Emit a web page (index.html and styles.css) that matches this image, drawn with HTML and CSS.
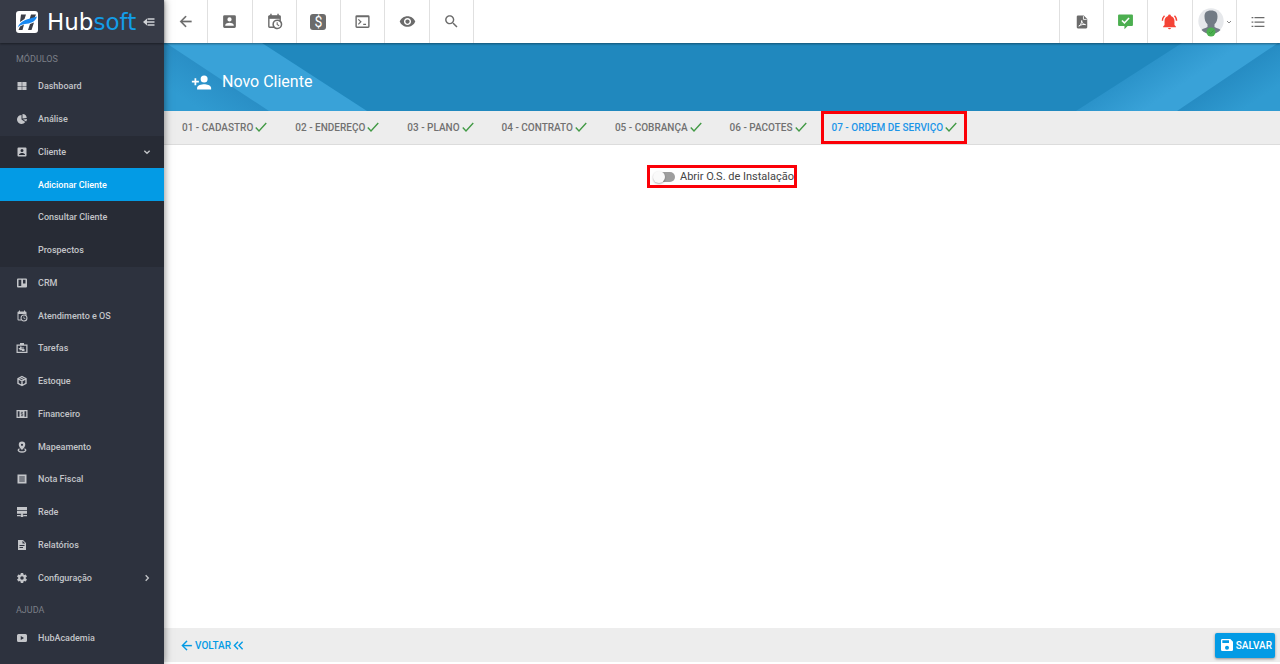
FILE: index.html
```html
<!DOCTYPE html>
<html lang="pt-BR">
<head>
<meta charset="utf-8">
<meta name="viewport" content="width=device-width, initial-scale=1">
<title>Novo Cliente - Hubsoft</title>
<link rel="stylesheet" href="styles.css">
</head>
<body>
<svg class="sprite" aria-hidden="true">
  <symbol id="back" viewBox="0 0 24 24"><path d="M20.500 11H7.830l5.590-5.590L12 4l-8 8 8 8 1.410-1.410L7.830 13H20.500z" stroke="currentColor" stroke-width=".3"/></symbol>
  <symbol id="contact" viewBox="0 0 24 24"><path d="M6 17c0-2 4-3.1 6-3.1s6 1.1 6 3.1v1H6m9-9a3 3 0 0 1-3 3 3 3 0 0 1-3-3 3 3 0 0 1 3-3 3 3 0 0 1 3 3M3 5v14a2 2 0 0 0 2 2h14a2 2 0 0 0 2-2V5a2 2 0 0 0-2-2H5a2 2 0 0 0-2 2z"/></symbol>
  <symbol id="calendar" viewBox="0 0 24 24"><path d="M15 13h1.5v2.82l2.44 1.41-.75 1.3L15 16.69V13m4-5H5v11h4.67c-.43-.91-.67-1.93-.67-3a7 7 0 0 1 7-7c1.07 0 2.09.24 3 .67V8M5 21a2 2 0 0 1-2-2V5c0-1.11.89-2 2-2h1V1h2v2h8V1h2v2h1a2 2 0 0 1 2 2v6.1c1.24 1.26 2 2.99 2 4.9a7 7 0 0 1-7 7c-1.91 0-3.64-.76-4.9-2H5m11-9.85A4.85 4.85 0 0 0 11.15 16c0 2.68 2.17 4.85 4.85 4.85A4.85 4.85 0 0 0 20.85 16c0-2.68-2.17-4.85-4.85-4.85z"/><path d="M4 4h16v3.500H4z"/></symbol>
  <symbol id="console" viewBox="0 0 24 24"><path d="M20 19V6H4v13h16m0-16a2 2 0 0 1 2 2v14a2 2 0 0 1-2 2H4a2 2 0 0 1-2-2V5a2 2 0 0 1 2-2h16m-7 14v-2h4v2h-4m-6.300-.3l-1.200-1.200 3-3-3-3 1.200-1.200 4.200 4.200z"/></symbol>
  <symbol id="eye" viewBox="0 0 24 24"><path d="M12 4.500C7 4.500 2.730 7.610 1 12c1.730 4.390 6 7.500 11 7.500s9.270-3.110 11-7.500c-1.730-4.390-6-7.500-11-7.500zM12 17c-2.760 0-5-2.240-5-5s2.240-5 5-5 5 2.240 5 5-2.240 5-5 5zm0-8c-1.660 0-3 1.340-3 3s1.340 3 3 3 3-1.340 3-3-1.340-3-3-3z"/></symbol>
  <symbol id="search" viewBox="0 0 24 24"><path d="M15.500 14h-.79l-.28-.27C15.410 12.590 16 11.110 16 9.500 16 5.910 13.090 3 9.500 3S3 5.910 3 9.500 5.910 16 9.500 16c1.610 0 3.090-.59 4.230-1.570l.27.28v.79l5 4.990L20.490 19l-4.990-5zm-6 0C7.010 14 5 11.990 5 9.500S7.010 5 9.500 5 14 7.010 14 9.500 11.990 14 9.500 14z"/></symbol>
  <symbol id="pdf" viewBox="0 0 24 24"><path d="M5 1h10l6 6v14a2 2 0 0 1-2 2H5a2 2 0 0 1-2-2V3a2 2 0 0 1 2-2z"/><path d="M14.500 2v5.500H20" fill="none" stroke="#fff" stroke-width="1.500"/><path d="M6.500 19c2-.5 5-4.500 5-9.500 0 3.500 2 6.500 6.500 7-3-1.200-8 .2-11.500 2.500z" fill="none" stroke="#fff" stroke-width="1.700"/></symbol>
  <symbol id="message" viewBox="0 0 24 24"><path d="M3 2h18a1.500 1.500 0 0 1 1.500 1.500V17a1.500 1.500 0 0 1-1.500 1.500h-6L10.500 23v-4.500H3A1.500 1.500 0 0 1 1.500 17V3.500A1.500 1.500 0 0 1 3 2z"/><path d="M7 10.500l3.500 3.500L17 7" fill="none" stroke="#fff" stroke-width="2.200"/></symbol>
  <symbol id="bell" viewBox="0 0 24 24"><path d="M21 19v1H3v-1l2-2v-6c0-3.100 2.030-5.830 5-6.710V4a2 2 0 0 1 4 0v.29c2.970.88 5 3.610 5 6.710v6l2 2m-7 2a2 2 0 0 1-4 0m9.750-17.810l-1.420 1.420A8.980 8.980 0 0 1 21 11h2c0-2.930-1.160-5.750-3.250-7.810M1 11h2c0-2.400.96-4.700 2.670-6.390L4.250 3.190A10.960 10.960 0 0 0 1 11z"/></symbol>
  <symbol id="list" viewBox="0 0 24 24"><path d="M6 3.500h17v2.200H6zM6 11h17v2.200H6zM6 18.500h17v2.200H6zM1 3.500h3v2.200H1zM1 11h3v2.200H1zM1 18.500h3v2.200H1z"/></symbol>
  <symbol id="person-add" viewBox="0 0 24 24"><path d="M15 14c-2.670 0-8 1.330-8 4v2h16v-2c0-2.670-5.330-4-8-4m-9-4V7H4v3H1v2h3v3h2v-3h3v-2m6 2a4 4 0 0 0 0-8 4 4 0 0 0 0 8z"/></symbol>
  <symbol id="check" viewBox="0 0 24 24"><path d="M1.500 13l6.500 7L22.500 4" fill="none" stroke="currentColor" stroke-width="2.800"/></symbol>
  <symbol id="save" viewBox="0 0 24 24"><path d="M17 3H5a2 2 0 0 0-2 2v14a2 2 0 0 0 2 2h14a2 2 0 0 0 2-2V7l-4-4zm-5 16a3 3 0 1 1 0-6 3 3 0 0 1 0 6zm3-10H5V5h10v4z"/></symbol>
  <symbol id="gear" viewBox="0 0 24 24"><path d="M12 15.500A3.500 3.500 0 0 1 8.500 12 3.500 3.500 0 0 1 12 8.500a3.500 3.500 0 0 1 3.500 3.500 3.500 3.500 0 0 1-3.500 3.500m7.430-2.530c.04-.32.07-.64.07-.97s-.03-.66-.07-1l2.110-1.630c.19-.15.24-.42.12-.64l-2-3.460c-.12-.22-.39-.31-.61-.22l-2.490 1c-.52-.39-1.060-.73-1.690-.98l-.37-2.650A.5.5 0 0 0 14 2h-4c-.25 0-.46.18-.5.42l-.37 2.650c-.63.25-1.170.59-1.690.98l-2.490-1c-.22-.09-.49 0-.61.22l-2 3.460c-.13.22-.07.49.12.64L4.570 11c-.04.34-.07.67-.07 1s.03.65.07.97l-2.110 1.660c-.19.15-.25.42-.12.64l2 3.460c.12.22.39.3.61.22l2.490-1.010c.52.4 1.060.74 1.690.99l.37 2.650c.04.24.25.42.5.42h4c.25 0 .46-.18.5-.42l.37-2.650c.63-.26 1.170-.59 1.690-.99l2.490 1.010c.22.08.49 0 .61-.22l2-3.460c.12-.22.07-.49-.12-.64l-2.110-1.660z"/></symbol>
  <symbol id="dashboard" viewBox="0 0 24 24"><path d="M3 4h8.500v8H3zM12.500 4H21v8h-8.500zM3 13h8.500v7H3zM12.500 13H21v7h-8.500z"/></symbol>
  <symbol id="chart" viewBox="0 0 24 24"><path d="M11 4v9l7.500 5A9 9 0 1 1 11 4zM13 2a9 9 0 0 1 8.500 8L13 11zM14 13l8-1c0 2-.7 3.500-1.700 5z"/></symbol>
  <symbol id="board" viewBox="0 0 24 24"><path fill-rule="evenodd" d="M4 3h16a2 2 0 0 1 2 2v14a2 2 0 0 1-2 2H4a2 2 0 0 1-2-2V5a2 2 0 0 1 2-2zM5 5.500v12.500h5.500V5.500zm9 0v7.500h5V5.500z"/></symbol>
  <symbol id="task" viewBox="0 0 24 24"><path fill-rule="evenodd" d="M8 5V2h8v3h7v17H1V5zM3.500 7.500v12h17v-12z"/><path d="M8 9h3v2h5v2h-5v1h6v4h-5v-1.500H7V14H5.500v-2H8z"/></symbol>
  <symbol id="box" viewBox="0 0 24 24"><path d="M12 3l8 4.500v9L12 21l-8-4.500v-9zM4 7.500l8 4.500 8-4.500M12 12v9M8 5l8 4.500" fill="none" stroke="currentColor" stroke-width="2.800"/></symbol>
  <symbol id="money" viewBox="0 0 24 24"><path fill-rule="evenodd" d="M1 4h22v16H1zM3.500 6.500v11h3.500v-11zm13.500 0v11h3.500v-11z"/><path d="M14 9h-3.500v3h3v3H10M12 7v10" fill="none" stroke="#2d323e" stroke-width="1"/></symbol>
  <symbol id="pin" viewBox="0 0 24 24"><path fill-rule="evenodd" d="M12 1a6.500 6.500 0 0 1 6.500 6.500C18.500 12 12 18 12 18S5.500 12 5.500 7.500A6.500 6.500 0 0 1 12 1zm0 4.500a2.200 2.200 0 1 0 0 4.400 2.200 2.200 0 0 0 0-4.400z"/><path d="M7 15.500c-6 3 0 6.500 5 6.500s11-3.500 5-6.500" fill="none" stroke="currentColor" stroke-width="2.600"/></symbol>
  <symbol id="note" viewBox="0 0 24 24"><path fill-rule="evenodd" d="M3 3h18v18H3zM6.500 7v1.800h11V7zm0 4v1.800h11V11zm0 4v1.800h11V15z"/></symbol>
  <symbol id="server" viewBox="0 0 24 24"><path d="M2 2h20v6H2zM2 9.500h20v6H2zM10.500 15h3v3h-3zM2 18h7v2.500H2zM15 18h7v2.500h-7zM9.500 17h5v5h-5z"/></symbol>
  <symbol id="doc" viewBox="0 0 24 24"><path fill-rule="evenodd" d="M4 2h10l6 6v14H4zM13 3.500V9h5.500zM7 12v1.800h10V12zm0 4v1.800h7V16z"/></symbol>
  <symbol id="video" viewBox="0 0 24 24"><path fill-rule="evenodd" d="M5 4h14a3 3 0 0 1 3 3v10a3 3 0 0 1-3 3H5a3 3 0 0 1-3-3V7a3 3 0 0 1 3-3zm4.500 4v8l6.500-4z"/></symbol>
  <symbol id="down" viewBox="0 0 24 24"><path d="M4 8l8 8 8-8" fill="none" stroke="currentColor" stroke-width="4"/></symbol>
  <symbol id="right" viewBox="0 0 24 24"><path d="M8 4l8 8-8 8" fill="none" stroke="currentColor" stroke-width="4"/></symbol>
  <symbol id="double-left" viewBox="0 0 24 24"><path d="M11 4l-8 8 8 8M21 4l-8 8 8 8" fill="none" stroke="currentColor" stroke-width="3"/></symbol>
</svg>

<div class="app">
  <aside class="sidebar">
    <header class="brand">
      <a class="brand-link" href="#" aria-label="Hubsoft">
        <svg class="brand-mark" viewBox="0 0 24 24" aria-hidden="true"><rect x="1" y="1" width="22" height="22" rx="3" fill="#fff"/><path d="M6 4.500h5L9.500 9 5 12zM16 4.500h5L19.500 8l-5 1.500zM5 16.500l4-2L7.500 20h-4zM15 14l4-1.500L16.500 20H13z" fill="#3c3f49"/><path d="M2.500 17.500C6 10 12 9.500 22 6.500c-1.500 5.500-7 7-12 7.500-3.500.5-5.500 1.500-7.500 3.500z" fill="#1688f2"/></svg>
        <span class="brand-name">Hub<span class="brand-soft">soft</span></span>
      </a>
      <button class="fold" type="button" aria-label="Recolher menu"><svg class="fold-icon" viewBox="0 0 24 24"><path d="M0 12l8-7v5.500h15v3H8V19zM9 4.500h14v2.800H9zM9 16.700h14v2.800H9z"/></svg></button>
    </header>
    <nav class="menu" aria-label="Principal">
      <h2 class="menu-title">MÓDULOS</h2>
      <ul class="menu-list">
        <li><a class="item" href="#"><svg class="item-icon"><use href="#dashboard"/></svg>Dashboard</a></li>
        <li><a class="item" href="#"><svg class="item-icon"><use href="#chart"/></svg>Análise</a></li>
        <li class="group">
          <a class="item" href="#"><svg class="item-icon"><use href="#contact"/></svg>Cliente<svg class="item-arrow"><use href="#down"/></svg></a>
          <a class="item sub active" href="#" aria-current="page">Adicionar Cliente</a>
          <a class="item sub" href="#">Consultar Cliente</a>
          <a class="item sub" href="#">Prospectos</a>
        </li>
        <li><a class="item" href="#"><svg class="item-icon"><use href="#board"/></svg>CRM</a></li>
        <li><a class="item" href="#"><svg class="item-icon"><use href="#calendar"/></svg>Atendimento e OS</a></li>
        <li><a class="item" href="#"><svg class="item-icon"><use href="#task"/></svg>Tarefas</a></li>
        <li><a class="item" href="#"><svg class="item-icon"><use href="#box"/></svg>Estoque</a></li>
        <li><a class="item" href="#"><svg class="item-icon"><use href="#money"/></svg>Financeiro</a></li>
        <li><a class="item" href="#"><svg class="item-icon"><use href="#pin"/></svg>Mapeamento</a></li>
        <li><a class="item" href="#"><svg class="item-icon"><use href="#note"/></svg>Nota Fiscal</a></li>
        <li><a class="item" href="#"><svg class="item-icon"><use href="#server"/></svg>Rede</a></li>
        <li><a class="item" href="#"><svg class="item-icon"><use href="#doc"/></svg>Relatórios</a></li>
        <li><a class="item" href="#"><svg class="item-icon"><use href="#gear"/></svg>Configuração<svg class="item-arrow"><use href="#right"/></svg></a></li>
      </ul>
      <h2 class="menu-title">AJUDA</h2>
      <ul class="help-list">
        <li><a class="item" href="#"><svg class="item-icon"><use href="#video"/></svg>HubAcademia</a></li>
      </ul>
    </nav>
  </aside>

  <div class="page">
    <header class="toolbar">
      <div class="tools tools-left">
        <button class="tool" type="button" aria-label="Voltar"><svg class="icon"><use href="#back"/></svg></button>
        <button class="tool" type="button" aria-label="Clientes"><svg class="icon"><use href="#contact"/></svg></button>
        <button class="tool" type="button" aria-label="Agenda"><svg class="icon"><use href="#calendar"/></svg></button>
        <button class="tool" type="button" aria-label="Financeiro"><span class="dollar">$</span></button>
        <button class="tool" type="button" aria-label="Console"><svg class="icon"><use href="#console"/></svg></button>
        <button class="tool" type="button" aria-label="Visualizar"><svg class="icon"><use href="#eye"/></svg></button>
        <button class="tool" type="button" aria-label="Buscar"><svg class="icon"><use href="#search"/></svg></button>
      </div>
      <div class="tools tools-right">
        <button class="tool" type="button" aria-label="PDF"><svg class="icon icon-small"><use href="#pdf"/></svg></button>
        <button class="tool tool-green" type="button" aria-label="Mensagens"><svg class="icon"><use href="#message"/></svg></button>
        <button class="tool tool-red" type="button" aria-label="Notificações"><svg class="icon"><use href="#bell"/></svg></button>
        <button class="tool tool-profile" type="button" aria-label="Perfil">
          <svg class="avatar" viewBox="0 0 26 30"><circle cx="13" cy="14" r="12.700" fill="#e6e8eb"/><path d="M13 3.500c4.800 0 6.500 2.300 6.500 6 0 3-1 6.300-3 7.800V20c3 1.500 4.500 1.500 6 3a13 13 0 0 1-19 0c1.500-1.500 3-1.500 6-3v-2.700c-2-1.500-3-4.800-3-7.800 0-3.700 1.700-6 6.500-6z" fill="#727b85"/><circle cx="13" cy="25" r="4.500" fill="#4caf50"/><path d="M11 25l1.500 1.500L15.500 23.500" fill="none" stroke="#3a9a3f"/></svg>
          <svg class="tiny"><use href="#down"/></svg>
        </button>
        <button class="tool" type="button" aria-label="Lista"><svg class="icon icon-small"><use href="#list"/></svg></button>
      </div>
    </header>

    <div class="banner">
      <svg class="rays rays-left" viewBox="0 0 204 68" aria-hidden="true">
        <defs><linearGradient id="ray-l" gradientUnits="userSpaceOnUse" x1="52" y1="34" x2="32" y2="64"><stop offset="0" stop-color="#2a8fc6"/><stop offset="1" stop-color="#309bd1"/></linearGradient></defs>
        <path d="M0 0h98l105 68H0z" fill="#39a2d8"/><path d="M0 0h2l103 68H0z" fill="url(#ray-l)"/>
      </svg>
      <svg class="rays rays-right" viewBox="0 0 204 68" aria-hidden="true">
        <defs><linearGradient id="ray-r" gradientUnits="userSpaceOnUse" x1="151" y1="34" x2="171" y2="64"><stop offset="0" stop-color="#268cc3"/><stop offset="1" stop-color="#309bd1"/></linearGradient><linearGradient id="band-r" gradientUnits="userSpaceOnUse" x1="53" y1="34" x2="73" y2="64"><stop offset="0" stop-color="#2b93ca"/><stop offset="1" stop-color="#39a2d8"/></linearGradient></defs>
        <path d="M106 0h98v68H0z" fill="url(#band-r)"/><path d="M202 0h2v68H101z" fill="url(#ray-r)"/>
      </svg>
      <svg class="banner-icon"><use href="#person-add"/></svg>
      <h1 class="banner-title">Novo Cliente</h1>
    </div>

    <div class="tabs" role="tablist">
      <button class="tab" type="button" role="tab">01 - CADASTRO<svg class="tab-check"><use href="#check"/></svg></button>
      <button class="tab" type="button" role="tab">02 - ENDEREÇO<svg class="tab-check"><use href="#check"/></svg></button>
      <button class="tab" type="button" role="tab">03 - PLANO<svg class="tab-check"><use href="#check"/></svg></button>
      <button class="tab" type="button" role="tab">04 - CONTRATO<svg class="tab-check"><use href="#check"/></svg></button>
      <button class="tab" type="button" role="tab">05 - COBRANÇA<svg class="tab-check"><use href="#check"/></svg></button>
      <button class="tab" type="button" role="tab">06 - PACOTES<svg class="tab-check"><use href="#check"/></svg></button>
      <button class="tab selected" type="button" role="tab" aria-selected="true">07 - ORDEM DE SERVIÇO<svg class="tab-check"><use href="#check"/></svg></button>
    </div>

    <main class="content">
      <label class="switch"><input class="switch-input" type="checkbox" role="switch"><span>Abrir O.S. de Instalação</span></label>
    </main>

    <footer class="actions">
      <button class="back" type="button"><svg class="back-icon"><use href="#back"/></svg>VOLTAR<svg class="back-double"><use href="#double-left"/></svg></button>
      <button class="save" type="button"><svg class="save-icon"><use href="#save"/></svg>SALVAR</button>
    </footer>
  </div>
</div>
</body>
</html>
```

FILE: styles.css
```css
* { box-sizing: border-box; }

body {
  margin: 0;
  font-family: Roboto, "Liberation Sans", sans-serif;
  background: #fff;
  color: #444;
}

button {
  font: inherit;
  color: inherit;
  background: none;
  border: 0;
  padding: 0;
  cursor: pointer;
}

svg { fill: currentColor; flex: none; }
a { color: inherit; text-decoration: none; }
ul { list-style: none; margin: 0; padding: 0; }

.sprite { display: none; }

.app { display: flex; min-height: 100vh; }

/* Sidebar */
.sidebar {
  position: relative;
  z-index: 2;
  flex: none;
  width: 164px;
  background: #2d323e;
  color: #c3c5c9;
  box-shadow: 0 0 8px rgba(0, 0, 0, 0.5);
}

.brand {
  display: flex;
  align-items: center;
  justify-content: space-between;
  height: 43px;
  padding: 0 9px 0 15px;
  background: #373b47;
  box-shadow: 0 1px 2px rgba(0, 0, 0, 0.4);
  color: #fff;
}

.brand-link { display: flex; align-items: center; gap: 8px; }
.brand-mark { width: 24px; height: 24px; }
.brand-name { font: 23px/24px "DejaVu Sans", sans-serif; }
.brand-soft { color: #139de8; }
.fold { display: flex; color: #d0d2d6; }
.fold-icon { width: 12px; height: 12px; }

.menu-title {
  margin: 0;
  padding: 6px 16px 0;
  font-size: 9px;
  line-height: 21px;
  font-weight: 400;
  color: #7b7f87;
}

.menu-list {
  display: grid;
  grid-auto-rows: 1fr;
  min-height: 524px;
}

.menu-list li { display: grid; }

.menu-list .group {
  grid-row: span 4;
  grid-auto-rows: 1fr;
  background: #272b35;
}

.item {
  display: flex;
  align-items: center;
  min-height: 33px;
  padding: 0 10px 0 16px;
  font-size: 9px;
  font-weight: 500;
}

.menu-list .item { min-height: 32px; }
.item-icon { width: 12px; height: 12px; margin-right: 10px; }
.item-arrow { width: 8px; height: 8px; margin: 0 3px 0 auto; }
.item.sub { padding-left: 38px; }
.active { background: #039be5; color: #fff; }

/* Page column */
.page { flex: 1; display: flex; flex-direction: column; min-width: 0; }

.toolbar {
  position: relative;
  z-index: 1;
  display: flex;
  justify-content: space-between;
  height: 43px;
  background: #fff;
  box-shadow: 0 1px 2px rgba(0, 0, 0, 0.4);
  color: #6b6b6b;
}

.tools { display: grid; grid-auto-flow: column; grid-auto-columns: 1fr; }
.tools-left { width: 310px; }
.tools-right { width: 221px; }

.tool { display: flex; align-items: center; justify-content: center; }
.tools-left .tool { border-right: 1px solid #e0e0e0; }
.tools-right .tool { border-left: 1px solid #e0e0e0; }
.tools-right .tool-green { color: #4caf50; }
.tools-right .tool-red { color: #f44336; }
.tools-right .tool-profile { padding-left: 2px; }

.icon { width: 17px; height: 17px; }
.icon-small { width: 14px; height: 14px; }

.dollar {
  width: 16px;
  border-radius: 3px;
  background: #6b6b6b;
  color: #fff;
  font-size: 14px;
  line-height: 16px;
}

.avatar { width: 26px; height: 30px; }
.tiny { width: 6px; height: 6px; margin-left: 2px; color: #888; }

.banner {
  position: relative;
  display: flex;
  align-items: center;
  gap: 10px;
  height: 68px;
  padding: 10px 27px 0;
  background: #2088be;
  color: #fff;
}

.rays { position: absolute; top: 0; width: 204px; height: 68px; }
.rays-left { left: 0; }
.rays-right { right: 0; }
.banner-icon { position: relative; width: 21px; height: 21px; }
.banner-title { position: relative; margin: 0; font-size: 16px; line-height: 20px; font-weight: 400; }

.tabs {
  display: flex;
  height: 34px;
  padding-left: 5px;
  background: #ededed;
  border-bottom: 1px solid #dcdcdc;
}

.tab {
  display: flex;
  align-items: center;
  gap: 2px;
  padding: 0 14px 1px;
  font-size: 10px;
  font-weight: 500;
  color: #717171;
  white-space: nowrap;
}

.tab:first-child { padding-left: 13px; }
.tab-check { width: 12px; height: 12px; color: #439a46; }

.selected {
  padding: 0 7px 1px 8px;
  border: 3px solid #fb0007;
  color: #1c95e8;
}

.content {
  flex: 1;
  display: flex;
  align-items: flex-start;
  justify-content: center;
  padding-top: 20px;
}

.switch {
  display: flex;
  align-items: center;
  gap: 5px;
  padding: 0 0 0 3px;
  border: 3px solid #fb0007;
  font-size: 11px;
  line-height: 17px;
}

.switch-input {
  appearance: none;
  position: relative;
  width: 22px;
  height: 12px;
  margin: 0;
}

.switch-input::before {
  content: "";
  position: absolute;
  inset: 1px 0 1px 3px;
  border-radius: 5px;
  background: #9e9e9e;
}

.switch-input::after {
  content: "";
  position: absolute;
  top: 0;
  left: 0;
  width: 12px;
  height: 12px;
  border-radius: 50%;
  background: #fafafa;
  box-shadow: 0 1px 2px rgba(0, 0, 0, 0.3);
}

.switch-input:checked::after { left: 10px; background: #039be5; }

.actions {
  display: flex;
  align-items: center;
  justify-content: space-between;
  height: 34px;
  margin-bottom: 2px;
  padding: 0 5px 0 15px;
  background: #ededed;
  font-size: 10px;
  font-weight: 500;
}

.back { display: flex; align-items: center; color: #039be5; gap: 1px; }
.back-icon { width: 15px; height: 15px; }
.back-double { width: 11px; height: 11px; margin-left: 1px; }

.save {
  display: flex;
  align-items: center;
  gap: 1px;
  height: 25px;
  padding: 0 3px 0 4px;
  border-radius: 2px;
  background: #039be5;
  color: #fff;
  box-shadow: 0 1px 3px rgba(0, 0, 0, 0.4);
}

.save-icon { width: 16px; height: 16px; }
```
